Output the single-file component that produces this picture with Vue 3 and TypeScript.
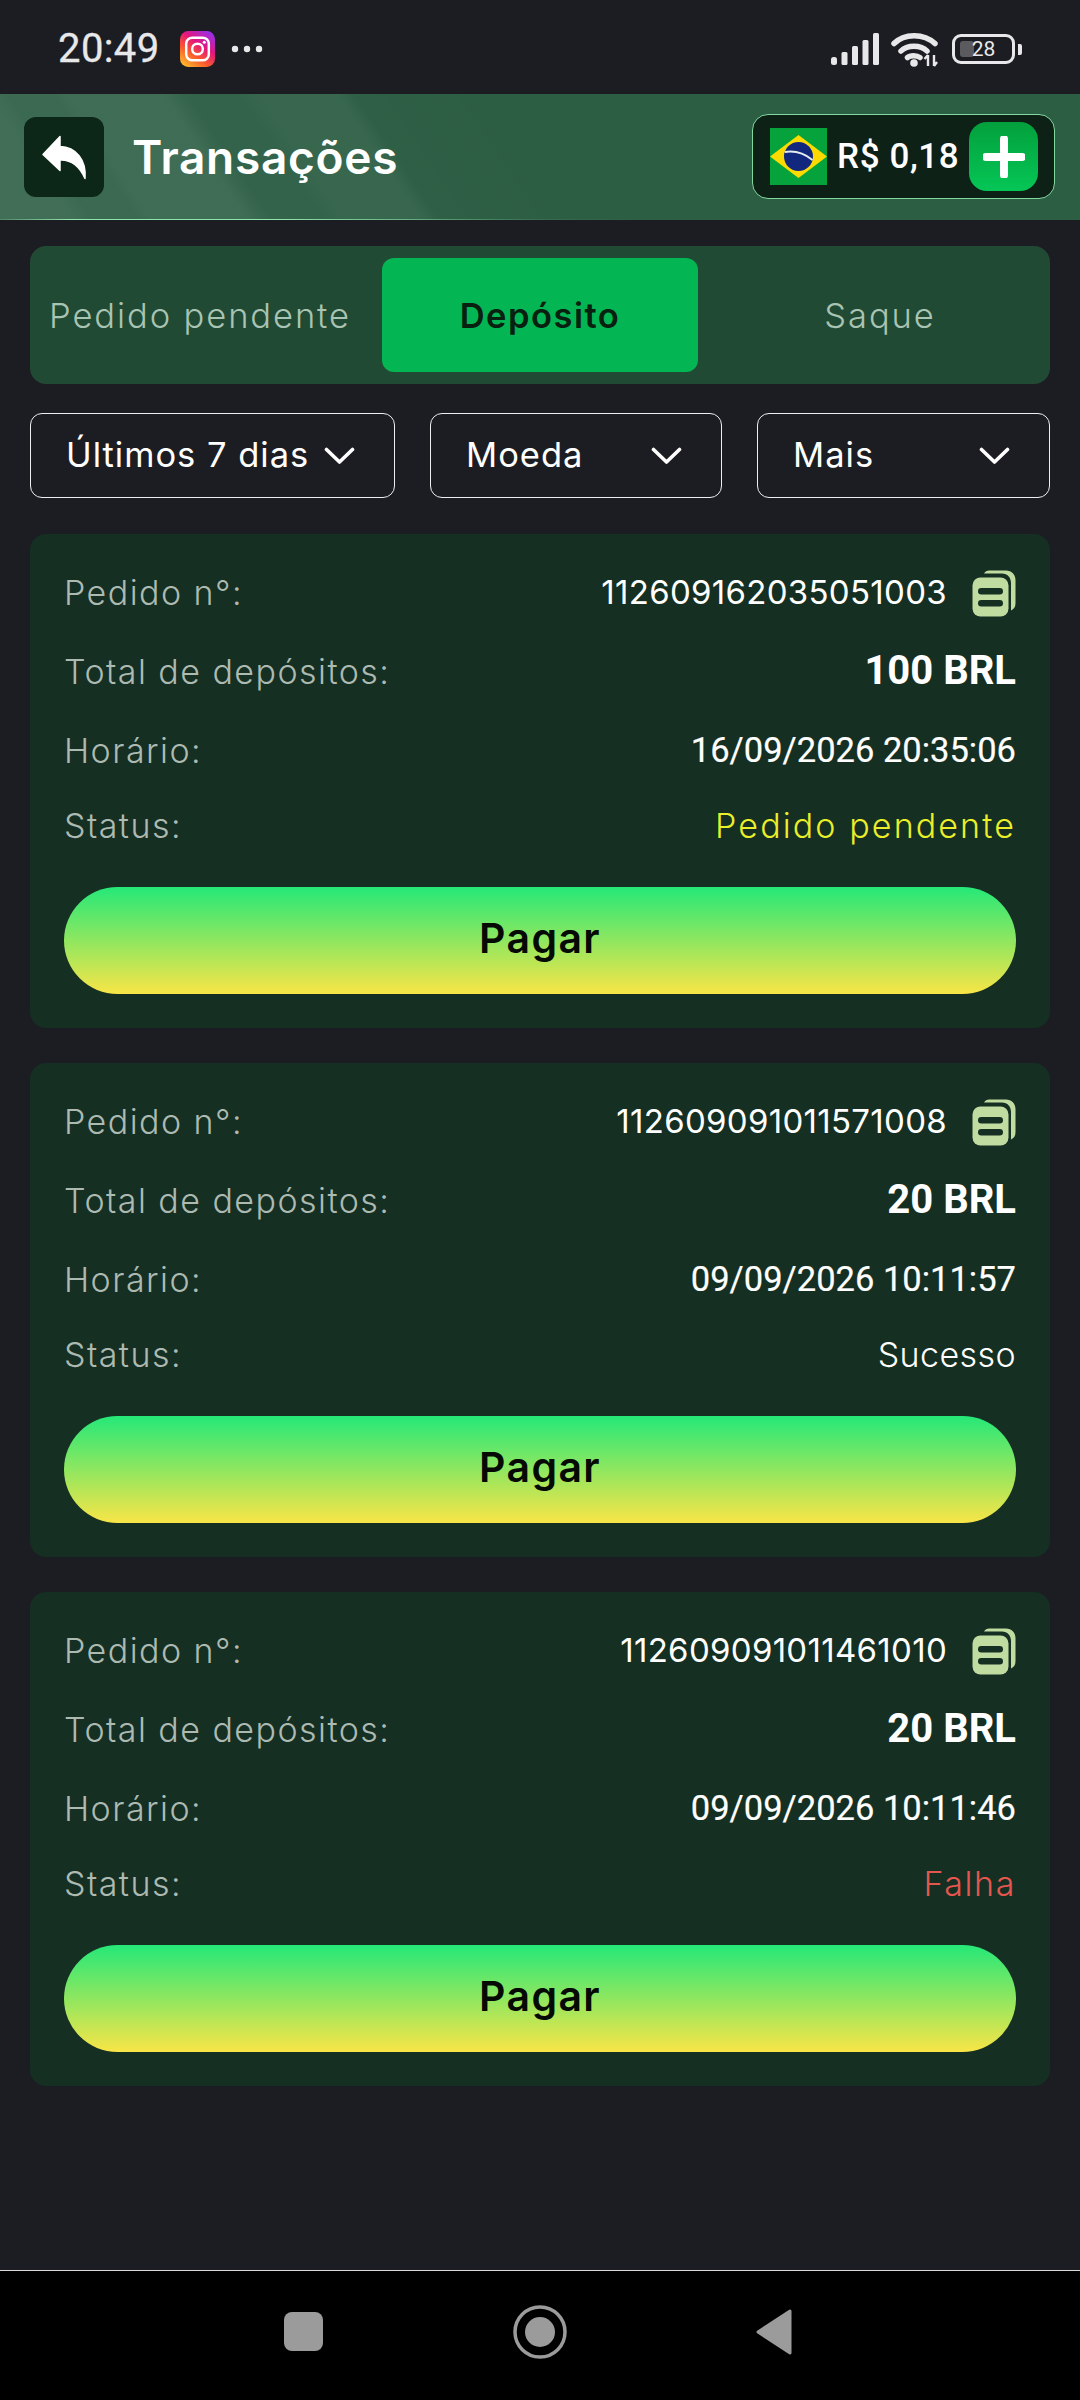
<script setup lang="ts">
interface Order {
  id: string
  total: string
  time: string
  status: string
  tone: string
}
const orders: Order[] = [
  { id: '112609162035051003', total: '100 BRL', time: '16/09/2026 20:35:06', status: 'Pedido pendente', tone: 'pending' },
  { id: '112609091011571008', total: '20 BRL', time: '09/09/2026 10:11:57', status: 'Sucesso', tone: 'ok' },
  { id: '112609091011461010', total: '20 BRL', time: '09/09/2026 10:11:46', status: 'Falha', tone: 'fail' },
]
const filters = ['Últimos 7 dias', 'Moeda', 'Mais']
</script>

<template>
  <div class="screen">
    <div class="status">
      <div class="status-left">
        <span class="clock">20:49</span>
        <svg class="insta" viewBox="0 0 34 35" width="35" height="36">
          <defs>
            <linearGradient id="ig" x1="0.1" y1="1" x2="0.8" y2="0">
              <stop offset="0" stop-color="#fdc42c" />
              <stop offset="0.35" stop-color="#fb5a2c" />
              <stop offset="0.65" stop-color="#e3167f" />
              <stop offset="1" stop-color="#9a2fe8" />
            </linearGradient>
          </defs>
          <rect width="34" height="35" rx="8" fill="url(#ig)" />
          <rect x="6" y="6.5" width="22" height="22" rx="6" fill="none" stroke="#fff" stroke-width="2.4" />
          <circle cx="17" cy="17.5" r="5.2" fill="none" stroke="#fff" stroke-width="2.4" />
          <circle cx="23.6" cy="11" r="1.5" fill="#fff" />
        </svg>
        <svg class="dots" viewBox="0 0 32 8" width="32" height="8">
          <circle cx="4" cy="4" r="3.2" fill="#e8e8ea" />
          <circle cx="16" cy="4" r="3.2" fill="#e8e8ea" />
          <circle cx="28" cy="4" r="3.2" fill="#e8e8ea" />
        </svg>
      </div>
      <div class="status-right">
        <svg viewBox="0 0 48 32" width="48" height="32">
          <g fill="#e8e8ea">
            <rect x="0" y="24" width="6" height="8" rx="2.5" />
            <rect x="10.500" y="19" width="6" height="13" rx="1.500" />
            <rect x="21" y="13" width="6" height="19" rx="1.500" />
            <rect x="31.500" y="7" width="6" height="25" rx="1.500" />
            <rect x="42" y="0" width="6" height="32" rx="1.500" />
          </g>
        </svg>
        <svg class="wifi" viewBox="0 0 47 35" width="47" height="35">
          <g fill="none" stroke="#e8e8ea" stroke-linecap="round" stroke-width="5.500">
            <path d="M3 11.500C13 1 33 1 44 11.500" />
            <path d="M10 19C16 12.500 30 12.500 36 19" />
            <path d="M16.500 25.500C19 23 26 23 29 25.500" />
          </g>
          <circle cx="23" cy="31" r="3.800" fill="#e8e8ea" />
          <path d="M37 34V23M33.500 27l3.500-4 M43 23v11M43 34l3-4" stroke="#e8e8ea" stroke-width="2.400" fill="none" />
        </svg>
        <div class="battery">
          <div class="cell"><span class="fill"></span><span class="pct">28</span></div>
          <span class="nib"></span>
        </div>
      </div>
    </div>

    <header class="topbar">
      <div class="top-left">
        <button class="back" aria-label="Voltar">
          <svg viewBox="0 0 46 46" width="46" height="46">
            <path d="M19 2.500 2 20.500 19 36.500V26C29 25.500 38 31 44 44.500 45.500 26 35 13 19 12.500Z" fill="#fff" stroke="#fff" stroke-width="1.500" stroke-linejoin="round" />
          </svg>
        </button>
        <h1 class="title">Transações</h1>
      </div>
      <div class="wallet">
        <svg class="flag" viewBox="0 0 57 57" width="57" height="59">
          <rect width="57" height="57" fill="#06a23c" />
          <path d="M28.500 7 57 28.500 28.500 50 0 28.500Z" fill="#fddb00" />
          <circle cx="28.500" cy="28.500" r="14.500" fill="#12287e" />
          <path d="M14.800 24C24 22.500 34 25 42.500 32" stroke="#e5ecf0" stroke-width="2" fill="none" />
        </svg>
        <span class="amount">R$ 0,18</span>
        <button class="plus" aria-label="Adicionar">
          <svg viewBox="0 0 42 42" width="42" height="42">
            <path d="M21 3v36M3 21h36" stroke="#fff" stroke-width="8" stroke-linecap="round" />
          </svg>
        </button>
      </div>
    </header>

    <main class="content">
      <nav class="tabs">
        <span class="tab">Pedido pendente</span>
        <span class="tab active">Depósito</span>
        <span class="tab">Saque</span>
      </nav>

      <div class="filters">
        <div v-for="f in filters" :key="f" class="filter">
          <span>{{ f }}</span>
          <svg viewBox="0 0 31 18" width="31" height="18">
            <path d="M2.500 2.500 15.500 15 28.500 2.500" fill="none" stroke="#fff" stroke-width="3.600" stroke-linecap="round" stroke-linejoin="round" />
          </svg>
        </div>
      </div>

      <section v-for="o in orders" :key="o.id" class="card">
        <div class="row">
          <span class="label">Pedido n°:</span>
          <span class="id-wrap">
            <span class="order-id">{{ o.id }}</span>
            <svg class="copy" viewBox="0 0 44 47" width="44" height="47">
              <path d="M12 3.500C13 1.500 15 0.500 17 0.500H34C39.500 0.500 43.500 4.500 43.500 10V33C43.500 37 42 39 39 40.500V13C39 7.500 35.500 3.500 30 3.500Z" fill="#c1dca1" />
              <rect x="0.500" y="7.500" width="36" height="39" rx="8" fill="#c1dca1" />
              <rect x="6" y="18" width="25" height="6.500" rx="3.250" fill="#152f23" />
              <rect x="6" y="30" width="25" height="6.500" rx="3.250" fill="#152f23" />
            </svg>
          </span>
        </div>
        <div class="row">
          <span class="label">Total de depósitos:</span>
          <span class="total">{{ o.total }}</span>
        </div>
        <div class="row">
          <span class="label">Horário:</span>
          <span class="time">{{ o.time }}</span>
        </div>
        <div class="row short">
          <span class="label">Status:</span>
          <span class="state" :class="o.tone">{{ o.status }}</span>
        </div>
        <button class="pay">Pagar</button>
      </section>
    </main>

    <footer class="navbar">
      <span class="nav-square"></span>
      <svg viewBox="0 0 54 54" width="54" height="54">
        <circle cx="27" cy="27" r="25" fill="none" stroke="#9b9b9b" stroke-width="3.500" />
        <circle cx="27" cy="27" r="15" fill="#9b9b9b" />
      </svg>
      <svg viewBox="0 0 36 46" width="36" height="46">
        <path d="M34 2 2 23 34 44Z" fill="#9b9b9b" stroke="#9b9b9b" stroke-width="3" stroke-linejoin="round" />
      </svg>
    </footer>
  </div>
</template>

<style>
html, body { margin: 0; background: #1c1d22; }
</style>

<style scoped>
.screen {
  width: 1080px;
  min-height: 2400px;
  display: flex;
  flex-direction: column;
  background: #1c1d22;
  font-family: Inter, "Liberation Sans", sans-serif;
  color: #fff;
}
.status {
  height: 94px;
  box-sizing: border-box;
  padding: 4px 58px 0 58px;
  display: flex;
  align-items: center;
  justify-content: space-between;
}
.status-left { display: flex; align-items: center; }
.clock { font: 400 40px/1 Roboto, sans-serif; color: #e8e8ea; letter-spacing: 0.4px; -webkit-text-stroke: 0.3px #e8e8ea; }
.insta { margin-left: 20px; }
.dots { margin-left: 16px; }
.status-right { display: flex; align-items: center; gap: 12px; }
.battery { display: flex; align-items: center; gap: 3px; margin-left: 2px; }
.cell {
  position: relative;
  box-sizing: border-box;
  width: 63px;
  height: 30px;
  border: 3px solid #e8e8ea;
  border-radius: 9px;
  display: flex;
  align-items: center;
  justify-content: center;
}
.fill {
  position: absolute;
  left: 5px;
  top: 4px;
  bottom: 4px;
  width: 14px;
  background: #5b5b5f;
  border-radius: 3px;
}
.pct { position: relative; font: 400 21px/1 Roboto, sans-serif; color: #e8e8ea; }
.nib { width: 4px; height: 11px; background: #e8e8ea; border-radius: 0 2px 2px 0; }
.topbar {
  height: 126px;
  box-sizing: border-box;
  padding: 0 25px 1px 24px;
  display: flex;
  align-items: center;
  justify-content: space-between;
  background:
    linear-gradient(90deg, rgba(143,230,171,0.2) 0, #8fe6ab 70px, #8fe6ab 280px, rgba(143,230,171,0.1) 540px, transparent 640px) left bottom / 100% 1px no-repeat,
    linear-gradient(56deg,
      rgba(255,255,255,0.1) 0 60px,
      rgba(255,255,255,0.07) 77px 115px,
      rgba(255,255,255,0.09) 125px 205px,
      rgba(255,255,255,0.035) 225px 270px,
      rgba(255,255,255,0.055) 285px 350px,
      rgba(255,255,255,0.01) 365px,
      rgba(255,255,255,0) 480px),
    #2c5e44;
}
.top-left { display: flex; align-items: center; gap: 28px; }
.back {
  width: 80px;
  height: 80px;
  padding: 0;
  border: 0;
  border-radius: 12px;
  background: #0c2617;
  display: flex;
  align-items: center;
  justify-content: center;
}
.title { margin: 0; font-size: 46px; font-weight: 600; line-height: 1; letter-spacing: 0.7px; }
.wallet {
  box-sizing: border-box;
  width: 303px;
  height: 85px;
  padding: 0 16px 0 17px;
  display: flex;
  align-items: center;
  background: #0e2117;
  border: 1px solid #82d9a0;
  border-radius: 16px;
}
.amount {
  margin-left: 10px;
  flex: 1;
  font: 500 35px/1 Roboto, sans-serif;
  letter-spacing: 0.6px;
  white-space: nowrap;
}
.plus {
  width: 69px;
  height: 69px;
  padding: 0;
  border: 0;
  border-radius: 18px;
  background: linear-gradient(180deg, #03a03c, #05c656);
  display: flex;
  align-items: center;
  justify-content: center;
}
.content {
  flex: 1;
  box-sizing: border-box;
  padding: 26px 30px 0;
  display: flex;
  flex-direction: column;
}
.tabs {
  height: 138px;
  display: flex;
  background: #214a35;
  border-radius: 16px;
}
.tab {
  flex: 0 0 340px;
  display: flex;
  align-items: center;
  justify-content: center;
  font-size: 34.5px;
  font-weight: 350;
  letter-spacing: 1.9px;
  color: #a9c4b2;
  white-space: nowrap;
}
.tab.active {
  flex: 0 0 316px;
  margin: 12px;
  background: #03b553;
  border-radius: 12px;
  color: #07200f;
  font-weight: 600;
  letter-spacing: 1.5px;
}
.filters {
  margin-top: 29px;
  display: grid;
  grid-template-columns: 365px 292px 293px;
  justify-content: space-between;
}
.filter {
  box-sizing: border-box;
  height: 85px;
  padding: 0 39px 0 35px;
  display: flex;
  align-items: center;
  justify-content: space-between;
  border: 1px solid #eceef0;
  border-radius: 12px;
  font-size: 34.5px;
  font-weight: 400;
  letter-spacing: 1px;
  white-space: nowrap;
}
.filter span { position: relative; top: -1px; }
.card {
  box-sizing: border-box;
  height: 494px;
  margin-top: 35px;
  padding: 34px 34px;
  background: #152f23;
  border-radius: 16px;
  display: flex;
  flex-direction: column;
}
.filters + .card { margin-top: 36px; }
.row {
  height: 48px;
  margin-bottom: 31px;
  display: flex;
  align-items: center;
  justify-content: space-between;
  white-space: nowrap;
}
.row.short { height: 40px; margin-bottom: 42px; }
.label { font-size: 34px; font-weight: 350; letter-spacing: 1.45px; color: #adbab2; }
.order-id { font-size: 33px; font-weight: 400; letter-spacing: 0.3px; margin-right: 1px; }
.state { font-size: 34px; font-weight: 350; }
.id-wrap { display: flex; align-items: center; gap: 24px; }
.copy { position: relative; top: 1px; }
.total { font: 700 40px/1 Roboto, sans-serif; }
.time { font: 400 34.500px/1 Roboto, sans-serif; -webkit-text-stroke: 0.2px #fff; }
.pending { color: #eaef29; letter-spacing: 2.1px; }
.ok { color: #fff; letter-spacing: 0.4px; }
.fail { color: #e5574e; letter-spacing: 1.6px; }
.pay {
  height: 107px;
  flex: none;
  padding: 0 0 5px;
  border: 0;
  border-radius: 54px;
  background: linear-gradient(180deg, #25e878, #f9e547);
  font-family: Inter, "Liberation Sans", sans-serif;
  font-size: 41px;
  font-weight: 600;
  letter-spacing: 1.4px;
  color: #050a05;
}
.navbar {
  height: 130px;
  box-sizing: border-box;
  padding: 0 288px 8px 284px;
  display: flex;
  align-items: center;
  justify-content: space-between;
  background: #000;
  border-top: 1px solid #dcdcdc;
}
.nav-square { width: 39px; height: 39px; background: #9b9b9b; border-radius: 8px; }
</style>
